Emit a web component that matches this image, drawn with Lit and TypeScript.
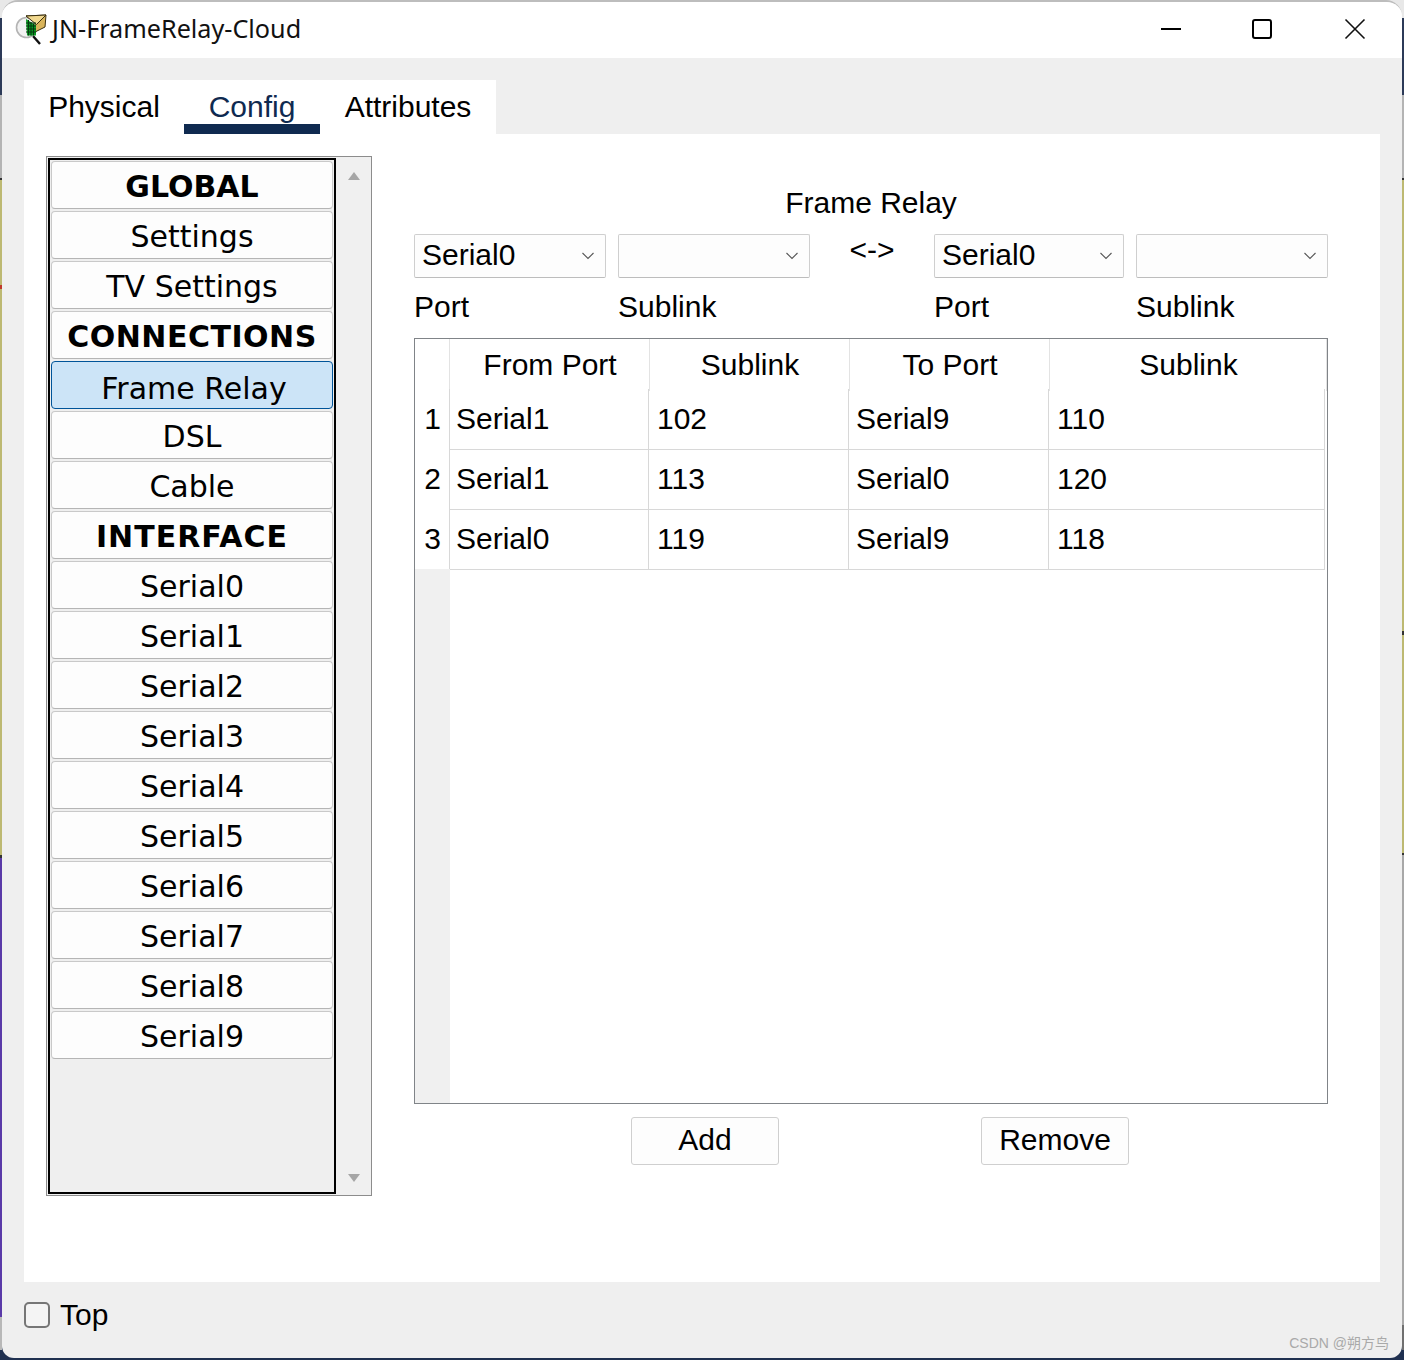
import { LitElement, html, css, svg } from "lit";
import { customElement } from "lit/decorators.js";

const NAV: [string, boolean, boolean][] = [
  ["GLOBAL", true, false],
  ["Settings", false, false],
  ["TV Settings", false, false],
  ["CONNECTIONS", true, false],
  ["Frame Relay", false, true],
  ["DSL", false, false],
  ["Cable", false, false],
  ["INTERFACE", true, false],
  ...Array.from({ length: 10 }, (_, i) => [`Serial${i}`, false, false] as [string, boolean, boolean]),
];

const ROWS = [
  ["1", "Serial1", "102", "Serial9", "110"],
  ["2", "Serial1", "113", "Serial0", "120"],
  ["3", "Serial0", "119", "Serial9", "118"],
];

const chevron = svg`<svg class="chev" width="14" height="10" viewBox="0 0 14 10"><path d="M1.5 2 L7 7.5 L12.5 2" fill="none" stroke="#555" stroke-width="1.1"/></svg>`;

const logo = svg`<svg class="logo" width="34" height="32" viewBox="0 0 34 32">
  <path d="M19 22 L26 30" stroke="#111" stroke-width="2.4" fill="none"/>
  <circle cx="12.5" cy="13.5" r="10" fill="#f2f2f2" stroke="#b4b4b4" stroke-width="1.6"/>
  <path d="M12 2 L32 1 L31 13 L21 18 L21 8 Z" fill="#d9b45a" stroke="#3a2f10" stroke-width="1"/>
  <path d="M12 2 L32 1 L22.5 10.5 Z" fill="#f1d88e" stroke="#3a2f10" stroke-width="1"/>
  <path d="M12 5 L22 11.5 L22 21.5 L13 21.5 Z" fill="#0a9a22"/>
  <path d="M14.5 6 V21.5 M17 8 V21.5 M19.5 9.5 V21.5 M12 9 H22 M12 12 H22 M12 15 H22 M12 18 H22" stroke="#04380f" stroke-width="1"/>
</svg>`;

@customElement("app-root")
export class AppRoot extends LitElement {
  static styles = css`
    :host { display: block; width: 1404px; height: 1360px; overflow: hidden;
      font-family: "Liberation Sans", Arial, sans-serif; font-size: 30px; color: #000;
      background:
        linear-gradient(to bottom, #e8e8e8 0 18px, #2c3a58 18px 95px, #b4b4b4 95px 178px, #333 178px 180px, #bdb972 180px 285px, #c0392b 285px 289px, #bdb972 289px 855px, #333 855px 858px, #5a3aa8 858px 1317px, #b8b8b8 1317px 1350px, #1f3050 1350px 100%) left top / 2px 100% no-repeat,
        linear-gradient(to bottom, #e8e8e8 0 18px, #2c3a58 18px 95px, #b4b4b4 95px 178px, #333 178px 180px, #bdb972 180px 631px, #333 631px 635px, #bdb972 635px 853px, #333 853px 855px, #a8a8a8 855px 1325px, #707070 1325px 1350px, #1f3050 1350px 100%) right top / 2px 100% no-repeat,
        linear-gradient(#e8e8e8, #e8e8e8) left top / 100% 20px no-repeat,
        #1f3050; }
    * { box-sizing: border-box; }
    .window { width: 1400px; height: 1358px; margin: 0 2px; background: #efefef; border-top: 2px solid #bdbdbd;
      border-radius: 16px 16px 12px 12px; overflow: hidden; display: flex; flex-direction: column; }
    .titlebar { height: 56px; flex: none; background: #fff; display: flex; align-items: center; padding-left: 12px; position: relative; }
    .logo { flex: none; }
    .title { font-family: "Noto Sans", "Open Sans", sans-serif; font-size: 25.2px; margin: 0 0 4px 4px; color: #111; }
    .winbtns { margin-left: auto; display: flex; align-items: center; }
    .winbtns svg { display: block; }
    .body { flex: 1; padding: 22px 22px 0 22px; display: flex; flex-direction: column; min-height: 0; }
    .tabs { display: flex; width: 472px; height: 54px; background: #fff; flex: none; }
    .tab { height: 54px; display: flex; align-items: flex-start; justify-content: center; padding-top: 9px; line-height: 36px; }
    .tab.t1 { width: 160px; }
    .tab.t2 { width: 136px; color: #0f2a50; border-bottom: 10px solid #0f2a50; }
    .tab.t3 { width: 176px; }
    .panel { width: 1356px; height: 1148px; background: #fff; flex: none; padding: 22px 0 0 22px; display: flex; }
    .side { width: 326px; height: 1040px; flex: none; border: 1px solid #8c8c8c; display: flex; background: #f0f0f0; }
    .list { width: 288px; margin: 1px 0 0 1px; height: 1036px; background: #efefef; border: 2px solid #000;
      padding: 1px 0 0 1px; display: flex; flex-direction: column; gap: 2px; flex: none; }
    .nav { width: 282px; height: 48px; flex: none; background: #fdfdfd; border: 1px solid #c9c9c9; border-bottom-color: #b5b5b5; border-radius: 4px;
      font-family: "DejaVu Sans", Verdana, sans-serif; font-size: 30px; line-height: 50px; text-align: center; white-space: nowrap; }
    .nav.b { font-weight: 700; letter-spacing: 0.5px; }
    .nav.narrow { letter-spacing: 0; }
    .nav.wide { letter-spacing: 1px; }
    .nav.sel { background: #cce4f7; border-color: #005499; line-height: 53px; padding-left: 4px; }
    .scroll { flex: 1; display: flex; flex-direction: column; justify-content: space-between; align-items: center; padding: 15px 0 13px; }
    .tri-u { width: 0; height: 0; border-left: 6px solid transparent; border-right: 6px solid transparent; border-bottom: 8px solid #a6a6a6; }
    .tri-d { width: 0; height: 0; border-left: 6px solid transparent; border-right: 6px solid transparent; border-top: 8px solid #a6a6a6; }
    .main { width: 914px; margin-left: 42px; flex: none; display: flex; flex-direction: column; }
    .heading { text-align: center; height: 34px; line-height: 34px; margin-top: 30px; }
    .ctl { display: grid; grid-template-columns: 204px 192px 124px 202px 192px; margin-top: 14px; }
    .sel-box { height: 44px; background: #fdfdfd; border: 1px solid #cfcfcf; border-bottom-color: #bdbdbd; border-radius: 2px; display: flex; align-items: center;
      justify-content: space-between; padding: 0 10px 0 7px; line-height: 40px; }
    .sel-box span { margin-bottom: 2px; }
    .s1 { width: 192px; }
    .s2 { width: 192px; }
    .s3 { width: 190px; padding-right: 10px; }
    .arrow { text-align: center; font-size: 30px; line-height: 32px; height: 44px; }
    .lbl { height: 36px; line-height: 36px; margin-top: 11px; }
    .table { width: 914px; height: 766px; margin-top: 13px; border: 1px solid #808488; display: flex; flex-direction: column; background: #fff; }
    .row { display: grid; grid-template-columns: 34px 199px 200px 200px 277px; flex: none; }
    .hrow { height: 50px; grid-template-columns: 34px 200px 200px 200px 278px; }
    .th { border-left: 1px solid #e3e3e3; text-align: center; line-height: 52px; padding-left: 1px; }
    .th.last { border-right: 1px solid #e3e3e3; }
    .corner { background: #fff; }
    .drow { height: 60px; }
    .rh { text-align: center; line-height: 60px; height: 60px; padding-left: 1px; }
    .td { border-left: 1px solid #d8d8d8; border-bottom: 1px solid #d8d8d8; line-height: 60px; padding-left: 6px; }
    .td.c3 { padding-left: 7px; }
    .td.num { padding-left: 8px; }
    .td.last { border-right: 1px solid #d8d8d8; }
    .rest { flex: 1; width: 35px; background: #f0f0f0; }
    .acts { display: flex; margin-top: 13px; padding-left: 217px; gap: 202px; }
    .btn { width: 148px; height: 48px; background: #fdfdfd; border: 1px solid #cfcfcf; border-radius: 3px; text-align: center; line-height: 44px; }
    .foot { flex: 1; position: relative; display: flex; align-items: center; padding-bottom: 10px; }
    .chk { width: 26px; height: 26px; border: 2px solid #767676; border-radius: 5px; background: #f4f4f4; flex: none; }
    .top { margin-left: 10px; line-height: 36px; }
    .wm { position: absolute; right: -9px; bottom: 6px; font-size: 14px; line-height: 18px; color: #a9a9a9;
      font-family: "Liberation Sans", "Noto Sans CJK SC", sans-serif; }
  `;

  render() {
    return html`
      <div class="window">
        <div class="titlebar">
          ${logo}
          <span class="title">JN-FrameRelay-Cloud</span>
          <div class="winbtns">
            <svg width="340" height="30" viewBox="0 0 340 30">
              <path d="M99 14 H119" stroke="#000" stroke-width="2"/>
              <rect x="191" y="5" width="18" height="18" rx="2" fill="none" stroke="#000" stroke-width="2"/>
              <path d="M283.5 4.5 L302.5 23.5 M302.5 4.5 L283.5 23.5" stroke="#111" stroke-width="1.6"/>
            </svg>
          </div>
        </div>
        <div class="body">
          <div class="tabs">
            <div class="tab t1">Physical</div>
            <div class="tab t2">Config</div>
            <div class="tab t3">Attributes</div>
          </div>
          <div class="panel">
            <div class="side">
              <div class="list">
                ${NAV.map(([t, b, s]) => html`<div class="nav ${b ? "b" : ""} ${s ? "sel" : ""} ${t === "INTERFACE" ? "wide" : ""} ${t === "GLOBAL" ? "narrow" : ""}">${t}</div>`)}
              </div>
              <div class="scroll"><div class="tri-u"></div><div class="tri-d"></div></div>
            </div>
            <div class="main">
              <div class="heading">Frame Relay</div>
              <div class="ctl">
                <div class="sel-box s1"><span>Serial0</span>${chevron}</div>
                <div class="sel-box s2"><span></span>${chevron}</div>
                <div class="arrow">&lt;-&gt;</div>
                <div class="sel-box s3"><span>Serial0</span>${chevron}</div>
                <div class="sel-box s2"><span></span>${chevron}</div>
                <div class="lbl">Port</div>
                <div class="lbl">Sublink</div>
                <div class="lbl"></div>
                <div class="lbl">Port</div>
                <div class="lbl">Sublink</div>
              </div>
              <div class="table">
                <div class="row hrow">
                  <div class="corner"></div>
                  <div class="th">From Port</div>
                  <div class="th">Sublink</div>
                  <div class="th">To Port</div>
                  <div class="th last">Sublink</div>
                </div>
                ${ROWS.map(
                  (r) => html`<div class="row drow">
                    <div class="rh">${r[0]}</div>
                    <div class="td">${r[1]}</div>
                    <div class="td num">${r[2]}</div>
                    <div class="td c3">${r[3]}</div>
                    <div class="td num last">${r[4]}</div>
                  </div>`
                )}
                <div class="rest"></div>
              </div>
              <div class="acts">
                <div class="btn">Add</div>
                <div class="btn">Remove</div>
              </div>
            </div>
          </div>
          <div class="foot">
            <div class="chk"></div>
            <span class="top">Top</span>
            <span class="wm">CSDN @朔方鸟</span>
          </div>
        </div>
      </div>
    `;
  }
}
